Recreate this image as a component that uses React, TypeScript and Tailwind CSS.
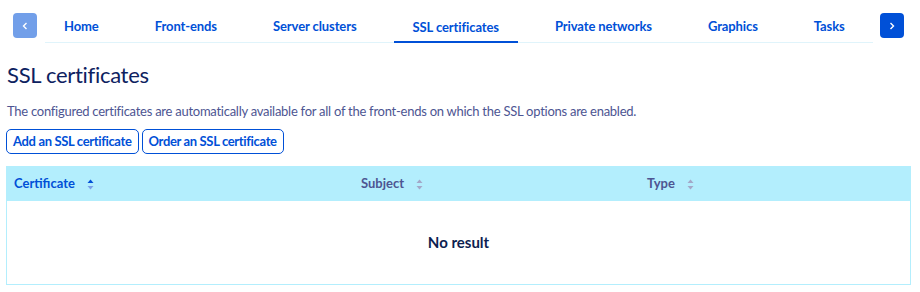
import React from "react";

const tabs = ["Home", "Front-ends", "Server clusters", "SSL certificates", "Private networks", "Graphics", "Tasks"];

function SortIcon({ active }: { active?: boolean }) {
  return (
    <svg width="7" height="11" viewBox="0 0 7 11" className="ml-[12px]">
      <path d="M3.5 0.5 L6.5 4 L0.5 4 Z" fill={active ? "#0050d7" : "#a3a8c8"} />
      <path d="M3.5 10.5 L6.5 7 L0.5 7 Z" fill={active ? "#7ba0e8" : "#a3a8c8"} />
    </svg>
  );
}

export default function App() {
  return (
    <div className="w-[920px] h-[292px] bg-white overflow-hidden" style={{ fontFamily: "Lato, 'Noto Sans', sans-serif" }}>
      <div className="flex items-start pt-[12px] pl-[13px]">
        <button className="w-[24px] h-[25px] rounded-[4px] bg-[#729fe9] flex items-center justify-center mt-[1px]">
          <svg width="8" height="10" viewBox="0 0 8 10"><path d="M5.5 2 L2.5 5 L5.5 8" stroke="white" strokeWidth="1.4" fill="none" /></svg>
        </button>
        <nav className="ml-[8px] w-[828px] h-[31px] border-b border-[#e0f4fb] flex gap-[18px]">
          {tabs.map((t) => {
            const active = t === "SSL certificates";
            return (
              <div key={t} className={`px-[19px] h-[30px] flex items-center text-[13px] font-bold text-[#0050d7] tracking-[-0.1px] ${active ? "border-b-2 border-[#0050d7] h-[31px] pt-[2px]" : ""}`}>
                {t}
              </div>
            );
          })}
        </nav>
        <button className="ml-[7px] w-[24px] h-[25px] rounded-[4px] bg-[#0050d7] flex items-center justify-center mt-[1px]">
          <svg width="8" height="10" viewBox="0 0 8 10"><path d="M2.5 2 L5.5 5 L2.5 8" stroke="white" strokeWidth="1.4" fill="none" /></svg>
        </button>
      </div>
      <div className="px-[6px]">
        <h1 className="mt-[17px] ml-[1px] text-[22px] leading-[30px] tracking-[-0.3px] text-[#0d2160]">SSL certificates</h1>
        <p className="mt-[12px] ml-[1px] text-[13px] leading-[18px] tracking-[-0.26px] text-[#4d5592]">
          The configured certificates are automatically available for all of the front-ends on which the SSL options are enabled.
        </p>
        <div className="mt-[9px] flex gap-[3px]">
          <button className="h-[25px] px-[6px] rounded-[5px] border border-[#0050d7] text-[13px] font-bold text-[#0050d7] tracking-[-0.35px]">Add an SSL certificate</button>
          <button className="h-[25px] px-[6px] rounded-[5px] border border-[#0050d7] text-[13px] font-bold text-[#0050d7] tracking-[-0.35px]">Order an SSL certificate</button>
        </div>
        <div className="mt-[12px] w-[905px] border border-[#b3eefd]">
          <div className="h-[34px] bg-[#b3eefd] flex items-center text-[13px] font-bold">
            <div className="w-[347px] pl-[7px] flex items-center text-[#0050d7]">Certificate<SortIcon active /></div>
            <div className="w-[286px] pl-[7px] flex items-center text-[#4d5592]">Subject<SortIcon /></div>
            <div className="flex-1 pl-[7px] flex items-center text-[#4d5592]">Type<SortIcon /></div>
          </div>
          <div className="h-[83px] flex items-center justify-center text-[15px] font-bold text-[#0d1e50]">No result</div>
        </div>
      </div>
    </div>
  );
}
